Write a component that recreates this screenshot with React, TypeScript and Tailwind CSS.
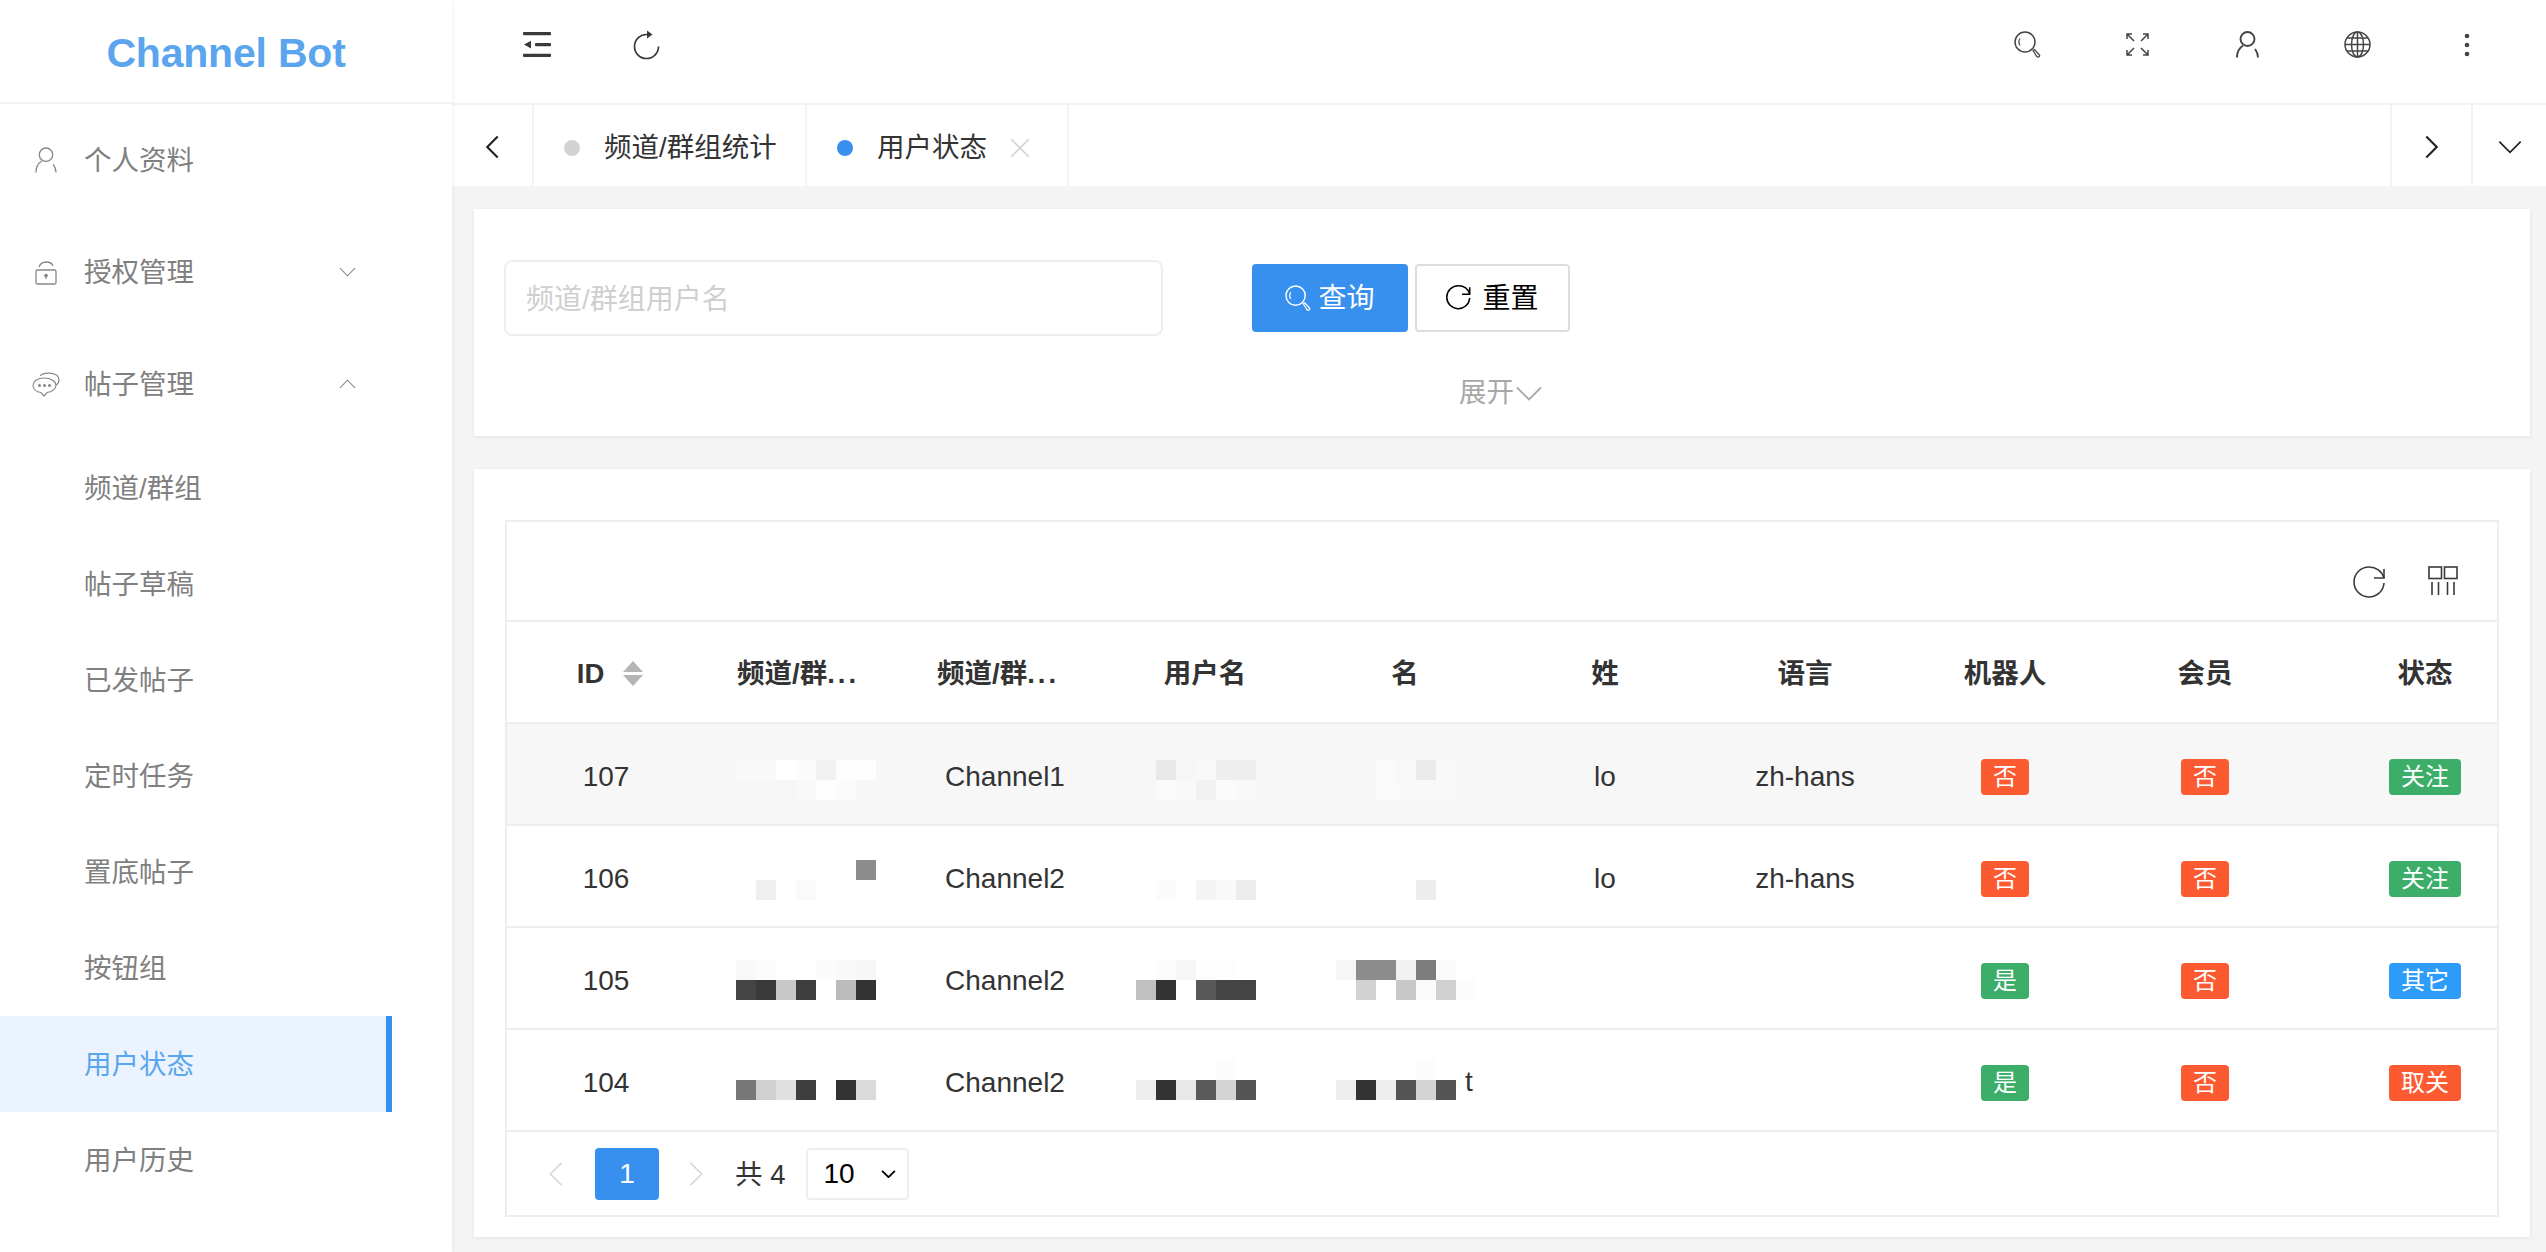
import React from "react";

type TagColor = "red" | "green" | "blue";

interface Row {
  id: number;
  channel: string;
  lastName: string;
  lang: string;
  bot: [string, TagColor];
  member: [string, TagColor];
  status: [string, TagColor];
  hover?: boolean;
  top: number; // mosaic offset inside the row
  mosaicA: string[][];
  mosaicB: string[][];
  mosaicC: string[][];
  suffix?: string;
}

const W = "#ffffff";
const H = "#f7f7f7";

const ROWS: Row[] = [
  {
    id: 107,
    channel: "Channel1",
    lastName: "lo",
    lang: "zh-hans",
    bot: ["否", "red"],
    member: ["否", "red"],
    status: ["关注", "green"],
    hover: true,
    top: 36,
    mosaicA: [
      ["#f9f9f9", "#f9f9f9", "#ffffff", "#fbfbfb", "#f1f1f1", "#fdfdfd", "#fdfdfd"],
      [H, H, "#f6f6f6", "#f8f8f8", "#fdfdfd", "#fbfbfb", H],
    ],
    mosaicB: [
      [H, "#e8e8ea", "#f6f6f6", "#f9f9f9", "#eeeeee", "#eeeeee"],
      [H, "#fafafa", "#f9f9f9", "#f2f2f2", "#fbfbfb", "#f9f9f9"],
    ],
    mosaicC: [
      [H, H, "#fafafa", "#f8f8f8", "#eaeaea", "#f8f8f8"],
      [H, H, "#fafafa", "#f9f9f9", "#f8f8f8", "#f8f8f8"],
    ],
  },
  {
    id: 106,
    channel: "Channel2",
    lastName: "lo",
    lang: "zh-hans",
    bot: ["否", "red"],
    member: ["否", "red"],
    status: ["关注", "green"],
    top: 34,
    mosaicA: [
      [W, W, W, W, W, W, "#8c8c8c"],
      [W, "#efefef", W, "#fafafa", W, W, W],
    ],
    mosaicB: [
      [W, W, W, W, W, W],
      [W, "#fbfbfb", W, "#f4f4f4", "#f9f9f9", "#ececec"],
    ],
    mosaicC: [
      [W, W, W, W, W],
      [W, W, W, W, "#ededed"],
    ],
  },
  {
    id: 105,
    channel: "Channel2",
    lastName: "",
    lang: "",
    bot: ["是", "green"],
    member: ["否", "red"],
    status: ["其它", "blue"],
    top: 32,
    mosaicA: [
      ["#f8f8f8", "#fcfcfc", W, W, "#fbfbfb", "#f9f9f9", "#f7f7f7"],
      ["#444444", "#3a3a3a", "#c8c8c8", "#3e3e3e", W, "#bbbbbb", "#333333"],
    ],
    mosaicB: [
      [W, "#fcfcfc", "#f6f6f6", "#fdfdfd", "#fdfdfd", W],
      ["#c0c0c0", "#333333", W, "#585858", "#444444", "#444444"],
    ],
    mosaicC: [
      ["#f6f6f6", "#8c8c8c", "#8c8c8c", "#f2f2f2", "#7c7c7c", "#fbfbfb", W],
      [W, "#d2d2d2", W, "#c8c8c8", "#fafafa", "#d0d0d0", "#fcfcfc"],
    ],
  },
  {
    id: 104,
    channel: "Channel2",
    lastName: "",
    lang: "",
    bot: ["是", "green"],
    member: ["否", "red"],
    status: ["取关", "red"],
    top: 30,
    mosaicA: [
      [W, W, W, W, W, W, W],
      ["#777777", "#d0d0d0", "#e0e0e0", "#3e3e3e", W, "#333333", "#dadada"],
    ],
    mosaicB: [
      [W, W, W, W, "#fcfcfc", W],
      ["#eeeeee", "#333333", "#e8e8e8", "#5a5a5a", "#d4d4d4", "#555555"],
    ],
    mosaicC: [
      [W, W, W, W, "#fcfcfc", W],
      ["#eeeeee", "#333333", "#eeeeee", "#555555", "#d4d4d4", "#555555"],
    ],
    suffix: "t",
  },
];

const SUB_MENU = ["频道/群组", "帖子草稿", "已发帖子", "定时任务", "置底帖子", "按钮组", "用户状态", "用户历史"];
const HEADERS = ["频道/群", "频道/群", "用户名", "名", "姓", "语言", "机器人", "会员", "状态"];

function Chevron({
  dir,
  className,
  weight = 1.2,
}: {
  dir: "up" | "down" | "left" | "right";
  className?: string;
  weight?: number;
}) {
  const d = {
    up: "M1 9 L9 1 L17 9",
    down: "M1 1 L9 9 L17 1",
    left: "M9 1 L1 9 L9 17",
    right: "M1 1 L9 9 L1 17",
  }[dir];
  const box = dir === "up" || dir === "down" ? "0 0 18 10" : "0 0 10 18";
  return (
    <svg viewBox={box} fill="none" stroke="currentColor" className={className}>
      <path d={d} strokeWidth={weight} />
    </svg>
  );
}

function Outdent() {
  return (
    <svg viewBox="0 0 28 25" className="w-[28px] h-[25px] text-[#3a3a3a]" fill="currentColor">
      <rect x="0" y="0" width="28" height="3.2" rx="1" />
      <rect x="12" y="11" width="16" height="3.2" rx="1" />
      <rect x="0" y="21.8" width="28" height="3.2" rx="1" />
      <path d="M1 12.6 L8 8.8 V16.4 Z" />
    </svg>
  );
}

// top bar reload, arrow head on top of the ring
function Reload() {
  return (
    <svg viewBox="0 0 28 30" fill="none" stroke="currentColor" className="w-[28px] h-[30px] text-[#3a3a3a]">
      <path d="M14 4.5 A12 12 0 1 0 25.5 16.5" strokeWidth="1.7" />
      <path d="M14 0.5 L19.5 4.5 L14 8.5 Z" fill="currentColor" stroke="none" />
    </svg>
  );
}

// reset / table refresh, corner arrow at the upper right
function Refresh({ className, weight = 1.6 }: { className?: string; weight?: number }) {
  return (
    <svg viewBox="0 0 34 34" fill="none" stroke="currentColor" className={className}>
      <path d="M31 12 C29 5 23 1 16 1 A15 15 0 1 0 31 17" strokeWidth={weight} />
      <path d="M31 3 V12 H21" strokeWidth={weight} />
    </svg>
  );
}

function SearchGlass({ className }: { className?: string }) {
  return (
    <svg viewBox="0 0 27 27" fill="none" stroke="currentColor" className={className}>
      <circle cx="11" cy="11" r="10" strokeWidth="1.5" />
      <path d="M6 7.5 A6.5 6.5 0 0 0 6 14.5" strokeWidth="1.2" />
      <path d="M19 19.5 L20.5 18.5 L25.5 24 A1.6 1.6 0 0 1 23 25.8 Z" strokeWidth="1.3" />
    </svg>
  );
}

function Fullscreen() {
  return (
    <svg viewBox="0 0 23 23" fill="none" stroke="#444" className="w-[23px] h-[23px]" strokeWidth="1.5">
      <path d="M1 6 V1 H6 M1 1 L8 8" />
      <path d="M22 6 V1 H17 M22 1 L15 8" />
      <path d="M1 17 V22 H6 M1 22 L8 15" />
      <path d="M22 17 V22 H17 M22 22 L15 15" />
    </svg>
  );
}

function Person({ className, width = 1.9 }: { className?: string; width?: number }) {
  return (
    <svg viewBox="0 0 23 27" fill="none" stroke="currentColor" strokeWidth={width} className={className}>
      <circle cx="11.5" cy="8" r="7" />
      <path d="M1 26.5 C1 20 4 16.5 7 14.5" />
      <path d="M22 26.5 C22 23 21 20.5 19 18" />
    </svg>
  );
}

function Globe() {
  return (
    <svg viewBox="0 0 27 27" fill="none" stroke="#444" strokeWidth="1.5" className="w-[27px] h-[27px]">
      <circle cx="13.5" cy="13.5" r="12.5" />
      <ellipse cx="13.5" cy="13.5" rx="6" ry="12.5" />
      <path d="M13.5 1 V26 M1 13.5 H26 M3 7 H24 M3 20 H24" />
    </svg>
  );
}

function Dots() {
  return (
    <svg viewBox="0 0 6 24" className="w-[6px] h-[24px]" fill="#444">
      <circle cx="3" cy="3" r="2.3" />
      <circle cx="3" cy="12" r="2.3" />
      <circle cx="3" cy="21" r="2.3" />
    </svg>
  );
}

function Lock() {
  return (
    <svg viewBox="0 0 22 25" fill="none" stroke="#888" strokeWidth="1.3" className="w-[22px] h-[25px]">
      <rect x="1" y="10" width="20" height="14" rx="1.5" />
      <path d="M4 7 C6 0.5 16 0.5 18 6" />
      <circle cx="11" cy="15.5" r="1.2" fill="#888" />
      <path d="M11 16 V19" />
    </svg>
  );
}

function Chat() {
  return (
    <svg viewBox="0 0 28 25" fill="none" stroke="#888" strokeWidth="1.2" className="w-[28px] h-[25px]">
      <path d="M12 6 C5 6 1 9.5 1 13.5 C1 17 4 20 9 20.5 L12 24 L15 20.5 C20 20 24 17 24 13.5 C24 9.5 19 6 12 6 Z" />
      <path d="M8 3.5 C14 -0.5 27 0.5 27 8 C27 10 26 12 24 13" />
      <circle cx="7.5" cy="13.5" r="0.9" fill="#888" />
      <circle cx="12.5" cy="13.5" r="0.9" fill="#888" />
      <circle cx="17.5" cy="13.5" r="0.9" fill="#888" />
    </svg>
  );
}

function ColumnsIcon() {
  return (
    <svg viewBox="0 0 30 30" fill="none" stroke="#3a3a3a" strokeWidth="1.6" className="w-[30px] h-[30px]">
      <rect x="1" y="1" width="12.5" height="11.5" />
      <rect x="16.5" y="1" width="12.5" height="11.5" />
      <path d="M4 16 V29 M10.5 16 V29 M19.5 16 V29 M26 16 V29" />
    </svg>
  );
}

function Mosaic({ cells, top }: { cells: string[][]; top: number }) {
  const cols = cells[0].length;
  return (
    <svg
      width={cols * 20}
      height={40}
      viewBox={`0 0 ${cols * 20} 40`}
      shapeRendering="crispEdges"
      className="absolute left-[31px]"
      style={{ top }}
    >
      {cells.map((row, y) =>
        row.map((c, x) => <rect key={`${x}-${y}`} x={x * 20} y={y * 20} width="20" height="20" fill={c} />)
      )}
    </svg>
  );
}

function Tag({ value }: { value: [string, TagColor] }) {
  const bg = value[1] === "red" ? "bg-[#fc5a31]" : value[1] === "green" ? "bg-[#3cae6a]" : "bg-[#2d9cfa]";
  return (
    <span className={`inline-flex items-center h-[36px] px-[12px] rounded-[4px] text-[24px] text-white ${bg}`}>
      {value[0]}
    </span>
  );
}

function MenuItem({ icon, label, chevron }: { icon: React.ReactNode; label: string; chevron?: "up" | "down" }) {
  return (
    <div className="h-[112px] flex items-center text-[27.5px] text-[#808080]">
      <div className="ml-[32px] w-[28px] flex justify-center">{icon}</div>
      <span className="flex-1 ml-[24px] pt-[2px]">{label}</span>
      {chevron && <Chevron dir={chevron} className="w-[17px] h-[10px] mr-[36px] text-[#888]" />}
    </div>
  );
}

function Sidebar() {
  return (
    <aside className="w-[452px] shrink-0 bg-white shadow-[0_0_6px_rgba(0,0,0,0.07)] z-10">
      <div className="h-[104px] pt-[6px] flex items-center justify-center border-b-2 border-[#f3f3f3] text-[41px] font-bold tracking-[-0.2px] text-[#5ba5ee]">
        Channel Bot
      </div>
      <nav className="w-[392px]">
        <MenuItem icon={<Person className="w-[22px] h-[26px] text-[#888]" width={1.4} />} label="个人资料" />
        <MenuItem icon={<Lock />} label="授权管理" chevron="down" />
        <MenuItem icon={<Chat />} label="帖子管理" chevron="up" />
        {SUB_MENU.map((label) => (
          <div
            key={label}
            className={
              label === "用户状态"
                ? "h-[96px] flex items-center pl-[84px] pt-[2px] text-[27.5px] text-[#5ba5ee] bg-[#ebf4fe] border-r-[6px] border-[#3790ee]"
                : "h-[96px] flex items-center pl-[84px] pt-[2px] text-[27.5px] text-[#808080]"
            }
          >
            {label}
          </div>
        ))}
      </nav>
    </aside>
  );
}

function TopBar() {
  return (
    <header className="h-[105px] shrink-0 bg-white border-b-2 border-[#f3f3f3] flex items-center justify-between pl-[30px] pr-[24px] pb-[14px]">
      <div className="flex items-center">
        <div className="w-[110px] flex justify-center"><Outdent /></div>
        <div className="w-[110px] flex justify-center"><Reload /></div>
      </div>
      <div className="flex items-center">
        <div className="w-[110px] flex justify-center"><SearchGlass className="w-[27px] h-[27px] text-[#444]" /></div>
        <div className="w-[110px] flex justify-center"><Fullscreen /></div>
        <div className="w-[110px] flex justify-center"><Person className="w-[23px] h-[27px] text-[#444]" /></div>
        <div className="w-[110px] flex justify-center"><Globe /></div>
        <div className="w-[110px] flex justify-center"><Dots /></div>
      </div>
    </header>
  );
}

function TabBar() {
  return (
    <div className="h-[81px] shrink-0 bg-white flex items-center text-[27.5px] text-[#333]">
      <div className="w-[82px] h-full pt-[2px] flex items-center justify-center border-r-2 border-[#f3f3f3]">
        <Chevron dir="left" className="w-[13px] h-[24px] text-[#222]" weight={1.6} />
      </div>
      <div className="w-[273px] h-full pt-[4px] flex items-center pl-[30px] border-r-2 border-[#f3f3f3]">
        <span className="w-[16px] h-[16px] rounded-full bg-[#d3d3d3] mr-[24px]" />
        频道/群组统计
      </div>
      <div className="w-[262px] h-full pt-[4px] flex items-center pl-[30px] border-r-2 border-[#f3f3f3]">
        <span className="w-[16px] h-[16px] rounded-full bg-[#3790ee] mr-[24px]" />
        用户状态
        <svg viewBox="0 0 20 20" className="w-[20px] h-[20px] ml-[23px]" fill="none" stroke="#ccc" strokeWidth="1.3">
          <path d="M1 1 L19 19 M19 1 L1 19" />
        </svg>
      </div>
      <div className="flex-1" />
      <div className="w-[81px] h-full pt-[2px] flex items-center justify-center border-l-2 border-[#f3f3f3]">
        <Chevron dir="right" className="w-[13px] h-[24px] text-[#222]" weight={1.6} />
      </div>
      <div className="w-[75px] h-full pt-[2px] flex items-center justify-center border-l-2 border-[#f3f3f3]">
        <Chevron dir="down" className="w-[24px] h-[14px] text-[#222]" weight={1.3} />
      </div>
    </div>
  );
}

function SearchCard() {
  return (
    <section className="h-[227px] bg-white shadow-[0_1px_4px_rgba(0,0,0,0.08)] pt-[51px] pl-[30px]">
      <div className="flex items-center">
        <div className="w-[659px] h-[76px] border-2 border-[#eeeeee] rounded-[8px] flex items-center pl-[20px] pt-[3px] text-[28px] text-[#cfcfcf]">
          频道/群组用户名
        </div>
        <button className="ml-[89px] w-[156px] h-[68px] rounded-[4px] bg-[#3790ee] text-white text-[28px] flex items-center justify-center gap-[7px]">
          <SearchGlass className="w-[26px] h-[26px]" />
          <span className="pt-[2px]">查询</span>
        </button>
        <button className="ml-[7px] w-[155px] h-[68px] rounded-[4px] bg-white border-2 border-[#dddddd] text-black text-[28px] flex items-center justify-center gap-[10px]">
          <Refresh className="w-[26px] h-[26px]" weight={2} />
          <span className="pt-[2px]">重置</span>
        </button>
      </div>
      <div className="mt-[37px] pr-[32px] flex items-center justify-center text-[27.5px] leading-[40px] text-[#a8a8a8]">
        展开
        <Chevron dir="down" className="w-[28px] h-[15px] ml-[1px]" />
      </div>
    </section>
  );
}

function UserTable() {
  const cols = "grid grid-cols-[198px_repeat(8,200px)_240px]";
  return (
    <section className="mt-[33px] h-[768px] bg-white shadow-[0_1px_4px_rgba(0,0,0,0.08)] pt-[51px] px-[31px]">
      <div className="h-[697px] border-2 border-[#eeeeee] overflow-hidden text-[28px] text-[#333]">
        <div className="h-[100px] border-b-2 border-[#eeeeee] flex items-start justify-end pt-[44px] pr-[39px] gap-[41px]">
          <Refresh className="w-[34px] h-[34px] text-[#3a3a3a]" />
          <ColumnsIcon />
        </div>

        <div className={`${cols} h-[102px] border-b-2 border-[#eeeeee] text-[27.5px] font-semibold`}>
          <div className="flex items-center justify-center pl-[8px] pt-[3px] gap-[19px]">
            ID
            <svg viewBox="0 0 20 25" className="w-[20px] h-[25px]" fill="#b5b5b5">
              <path d="M10 0 L20 11 H0 Z" />
              <path d="M10 25 L0 14 H20 Z" />
            </svg>
          </div>
          {HEADERS.map((h, i) => (
            <div
              key={i}
              className={i < 2 ? "flex items-center pl-[32px] pt-[3px]" : "flex items-center justify-center pt-[3px]"}
            >
              {h}
              {i < 2 && <span className="tracking-[3px]">...</span>}
            </div>
          ))}
        </div>

        {ROWS.map((row) => (
          <div
            key={row.id}
            className={`${cols} h-[102px] border-b-2 border-[#eeeeee] ${row.hover ? "bg-[#f7f7f7]" : ""}`}
          >
            <div className="flex items-center justify-center pt-[5px]">{row.id}</div>
            <div className="relative"><Mosaic cells={row.mosaicA} top={row.top} /></div>
            <div className="flex items-center justify-center pt-[5px]">{row.channel}</div>
            <div className="relative"><Mosaic cells={row.mosaicB} top={row.top} /></div>
            <div className="relative">
              <Mosaic cells={row.mosaicC} top={row.top} />
              {row.suffix && <span className="absolute left-[160px] top-[31px]">{row.suffix}</span>}
            </div>
            <div className="flex items-center justify-center pt-[5px]">{row.lastName}</div>
            <div className="flex items-center justify-center pt-[5px]">{row.lang}</div>
            <div className="flex items-center justify-center pt-[5px]"><Tag value={row.bot} /></div>
            <div className="flex items-center justify-center pt-[5px]"><Tag value={row.member} /></div>
            <div className="flex items-center justify-center pt-[5px]"><Tag value={row.status} /></div>
          </div>
        ))}

        <div className="h-[83px] flex items-center pl-[42px]">
          <Chevron dir="left" className="w-[14px] h-[26px] text-[#d8d8d8]" />
          <div className="ml-[32px] w-[64px] h-[52px] rounded-[4px] bg-[#3790ee] text-white flex items-center justify-center">
            1
          </div>
          <Chevron dir="right" className="ml-[30px] w-[14px] h-[26px] text-[#d8d8d8]" />
          <span className="ml-[32px] pt-[2px] text-[27.5px]">共 4</span>
          <div className="ml-[21px] w-[103px] h-[52px] rounded-[4px] border-2 border-[#eeeeee] flex items-center pl-[15px] pt-[1px] text-black">
            10
            <Chevron dir="down" className="ml-[26px] w-[15px] h-[8px]" weight={2.2} />
          </div>
        </div>
      </div>
    </section>
  );
}

export default function App() {
  return (
    <div className="h-screen w-full flex overflow-hidden bg-[#f4f4f4] font-['Liberation_Sans','Noto_Sans_CJK_SC',sans-serif]">
      <Sidebar />
      <div className="flex-1 min-w-0 flex flex-col">
        <TopBar />
        <TabBar />
        <main className="flex-1 pt-[23px] pl-[22px] pr-[16px]">
          <SearchCard />
          <UserTable />
        </main>
      </div>
    </div>
  );
}
